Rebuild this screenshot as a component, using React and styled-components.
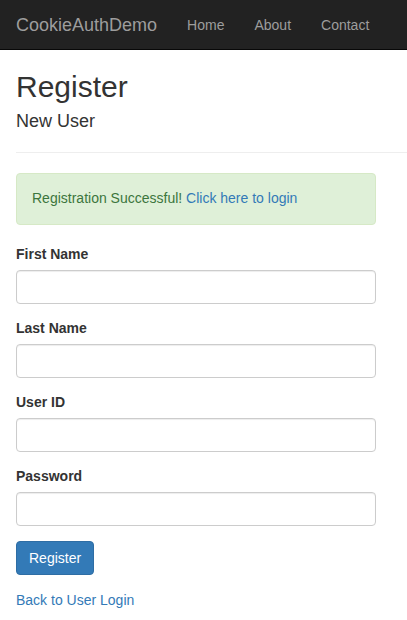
import React from "react";
import styled, { createGlobalStyle } from "styled-components";

const GlobalStyle = createGlobalStyle`
  * {
    box-sizing: border-box;
  }
  body {
    margin: 0;
    background: #fff;
    font-family: "Liberation Sans", Arial, Helvetica, sans-serif;
    font-size: 14px;
    line-height: 1.42857;
    color: #333;
  }
`;

const Navbar = styled.nav`
  height: 50px;
  background: #222;
  border-bottom: 1px solid #080808;
  display: flex;
  align-items: stretch;
`;

const Brand = styled.a`
  padding: 15px 15px 14px 16px;
  font-size: 18px;
  line-height: 20px;
  color: #9d9d9d;
  text-decoration: none;
`;

const NavLink = styled.a`
  padding: 15px 15px 14px;
  line-height: 20px;
  color: #9d9d9d;
  text-decoration: none;
`;

const Body = styled.main`
  padding: 0 0 0 16px;
`;

const Title = styled.h2`
  margin: 20px 0 9px;
  font-size: 30px;
  font-weight: 500;
  line-height: 1.1;
`;

const Subtitle = styled.h4`
  margin: 9px 0 10px;
  font-size: 18px;
  font-weight: 500;
  line-height: 1.1;
`;

const Rule = styled.hr`
  margin: 20px 0;
  border: 0;
  border-top: 1px solid #eee;
`;

const FormColumn = styled.div`
  width: 360px;
`;

const Alert = styled.div`
  padding: 15px;
  margin-bottom: 20px;
  border: 1px solid #d6e9c6;
  border-radius: 4px;
  background: #dff0d8;
  color: #3c763d;
`;

const Link = styled.a`
  color: #337ab7;
  text-decoration: none;
`;

const Group = styled.div`
  margin-bottom: ${(p) => (p.$last ? "16px" : "15px")};
`;

const Label = styled.label`
  display: block;
  margin-bottom: 5px;
  font-weight: 700;
`;

const Input = styled.input`
  display: block;
  width: 100%;
  height: 34px;
  padding: 6px 12px;
  font: inherit;
  color: #555;
  background: #fff;
  border: 1px solid #ccc;
  border-radius: 4px;
  box-shadow: inset 0 1px 1px rgba(0, 0, 0, 0.075);
  outline: none;
`;

const Button = styled.button`
  display: inline-block;
  padding: 6px 12px;
  font: inherit;
  line-height: 20px;
  color: #fff;
  background: #337ab7;
  border: 1px solid #2e6da4;
  border-radius: 4px;
  cursor: pointer;
`;

const fields = [
  { id: "first", label: "First Name", type: "text" },
  { id: "last", label: "Last Name", type: "text" },
  { id: "user", label: "User ID", type: "text" },
  { id: "pass", label: "Password", type: "password" },
];

export default function App() {
  return (
    <>
      <GlobalStyle />
      <Navbar>
        <Brand href="#">CookieAuthDemo</Brand>
        <NavLink href="#">Home</NavLink>
        <NavLink href="#">About</NavLink>
        <NavLink href="#">Contact</NavLink>
      </Navbar>
      <Body>
        <Title>Register</Title>
        <Subtitle>New User</Subtitle>
        <Rule />
        <FormColumn>
          <Alert>
            Registration Successful! <Link href="#">Click here to login</Link>
          </Alert>
          {fields.map((f) => (
            <Group key={f.id}>
              <Label htmlFor={f.id}>{f.label}</Label>
              <Input id={f.id} type={f.type} />
            </Group>
          ))}
          <Group $last>
            <Button type="button">Register</Button>
          </Group>
          <Link href="#">Back to User Login</Link>
        </FormColumn>
      </Body>
    </>
  );
}
